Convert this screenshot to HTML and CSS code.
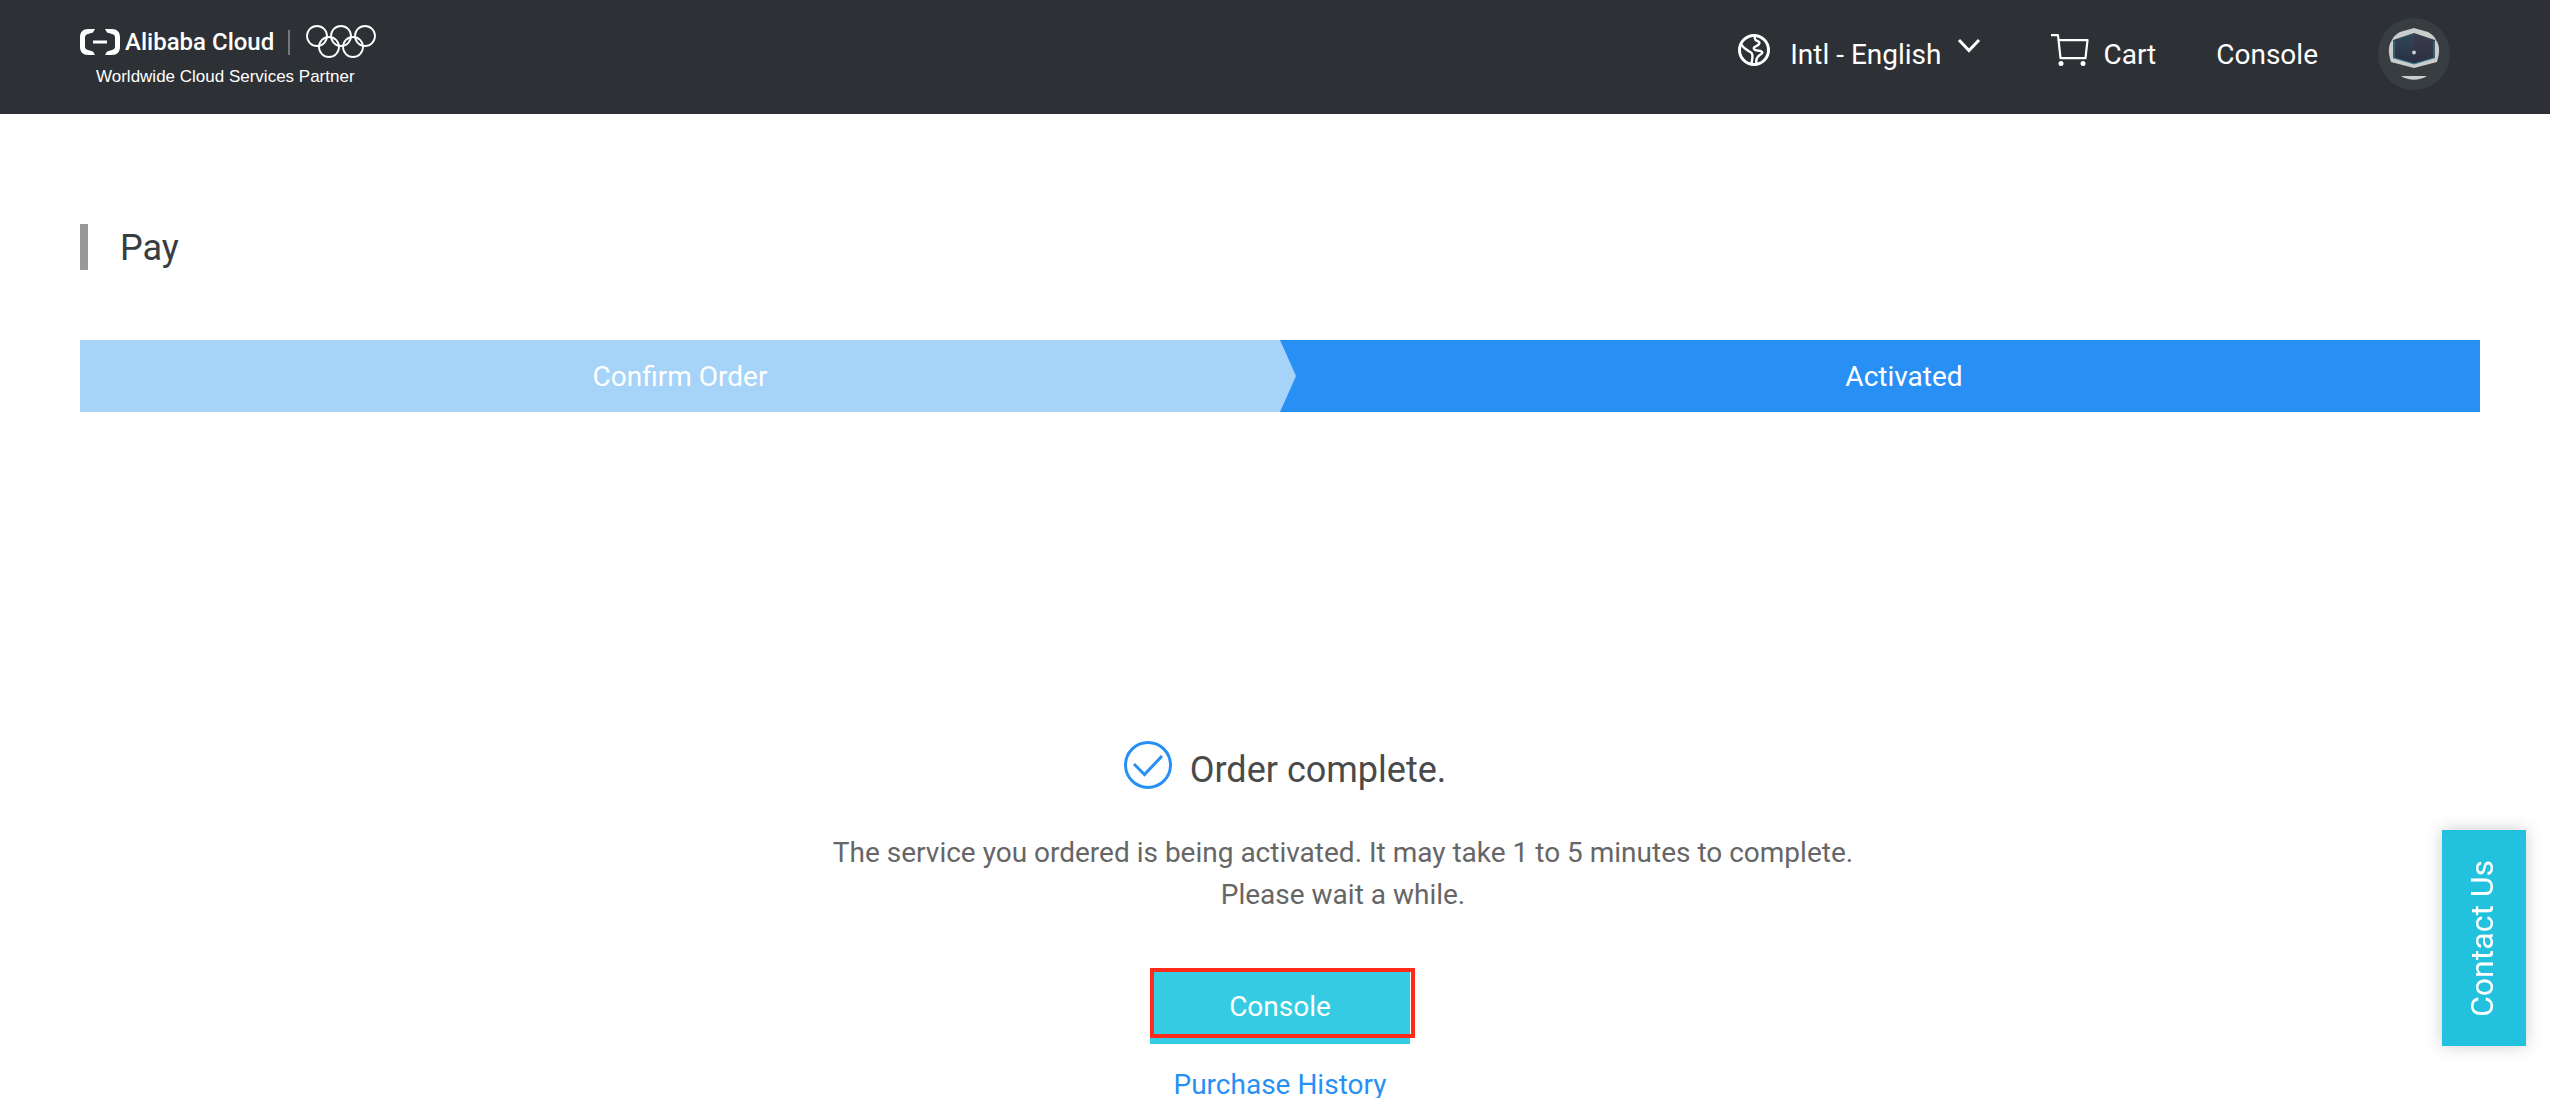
FILE: index.html
```html
<!DOCTYPE html>
<html lang="en">
<head>
<meta charset="utf-8">
<meta name="viewport" content="width=device-width, initial-scale=1">
<title>Pay - Alibaba Cloud</title>
<link rel="stylesheet" href="styles.css">
</head>
<body>
<header class="topbar">
  <a class="brand" href="#">
    <span class="brand-row">
      <svg class="brand-mark" viewBox="0 0 40 26" aria-hidden="true">
        <path fill="#fff" d="M15 0H8C3 0 0 3 0 8v10c0 5 3 8 8 8h7l-2-3.500-5-1.500c-2-.5-3-1.500-3-3.500v-9C5 6.500 6 5.500 8 5l5-1.500zM25 0h7c5 0 8 3 8 8v10c0 5-3 8-8 8h-7l2-3.500 5-1.500c2-.5 3-1.500 3-3.500v-9c0-2-1-3-3-3.500l-5-1.500zM13 11.500h14v3H13z"/>
      </svg>
      <span class="brand-name">Alibaba Cloud</span>
      <span class="brand-divider"></span>
      <svg class="rings" viewBox="0 0 70 34" fill="none" stroke="#fff" stroke-width="1.8" aria-hidden="true">
        <circle cx="11" cy="11" r="10"/><circle cx="35" cy="11" r="10"/><circle cx="59" cy="11" r="10"/>
        <circle cx="23" cy="22" r="10"/><circle cx="47" cy="22" r="10"/>
      </svg>
    </span>
    <span class="tagline">Worldwide Cloud Services Partner</span>
  </a>
  <nav class="nav">
    <button class="nav-item language" type="button">
      <svg class="globe" viewBox="0 0 32 32" fill="none" stroke="#fff" stroke-width="2.400" aria-hidden="true">
        <circle cx="16" cy="16" r="14.500" stroke-width="3"/>
        <path d="M3.500 10.500C5 14 9 16 13 18.500C16 20.500 14 25 13.500 30M17 2C16 6 18 6.500 20.500 7.500C23 9 20 11.500 17.500 12.500C14.500 14 16 16.500 19 16.500C24 16.500 26 18.500 22.500 20.500C19 22.500 17.500 25 18.500 30"/>
      </svg>
      <span>Intl - English</span>
      <svg class="chevron" viewBox="0 0 24 22" fill="none" stroke="#fff" stroke-width="3" aria-hidden="true"><path d="M2 6l10 10.500L22 6"/></svg>
    </button>
    <a class="nav-item cart" href="#">
      <svg class="cart-icon" viewBox="0 0 38 32" fill="none" stroke="#fff" stroke-width="2.200" aria-hidden="true">
        <path d="M0 1.200h7l2.500 23h25l2-18H7.500" stroke-linejoin="round"/>
        <circle cx="10" cy="29.500" r="2.500" fill="#fff" stroke="none"/><circle cx="32" cy="29.500" r="2.500" fill="#fff" stroke="none"/>
      </svg>
      <span>Cart</span>
    </a>
    <a class="nav-item" href="#">Console</a>
    <button class="avatar" type="button" aria-label="Account">
      <svg viewBox="0 0 72 72" aria-hidden="true">
        <defs>
          <linearGradient id="visor-left" x1="0" y1="0" x2="0" y2="1"><stop offset="0" stop-color="#30495a"/><stop offset="1" stop-color="#292f42"/></linearGradient>
          <linearGradient id="visor-right" x1="0" y1="0" x2="0" y2="1"><stop offset="0" stop-color="#3c3d4b"/><stop offset="1" stop-color="#292f42"/></linearGradient>
        </defs>
        <circle cx="36" cy="36" r="36" fill="#373d41"/>
        <path fill="#ccc" d="M36 10l14 4c4 2 7 5 8 8 4 6 4 12 1 22L36 50 13 44c-3-10-3-16 1-22 1-3 4-6 8-8z"/>
        <path fill="url(#visor-left)" d="M36 15L15 22v18l21 6z"/>
        <path fill="url(#visor-right)" d="M36 15l21 7v18l-21 6z"/>
        <path d="M16 23v17l20 6 20-6V23" fill="none" stroke="#3c8a9b"/>
        <circle cx="36" cy="34.500" r="2" fill="#ccc"/>
        <path fill="#ccc" d="M23 58h26c-8 5-18 5-26 0z"/>
      </svg>
    </button>
  </nav>
</header>
<main class="page">
  <h1 class="page-title">Pay</h1>
  <ol class="steps">
    <li class="step step-done">Confirm Order</li>
    <li class="step step-current" aria-current="step">Activated</li>
  </ol>
  <section class="result">
    <h2 class="result-title">
      <svg class="check" viewBox="0 0 48 48" fill="none" stroke="#2890f5" stroke-width="3" aria-hidden="true"><circle cx="24" cy="24" r="22.500"/><path d="M10 23l10.500 10.500L38 15"/></svg>
      <span>Order complete.</span>
    </h2>
    <p class="result-text">The service you ordered is being activated. It may take 1 to 5 minutes to complete.<br>Please wait a while.</p>
    <div class="action">
      <button class="console-button" type="button">Console</button>
      <span class="highlight"></span>
    </div>
    <a class="history" href="#">Purchase History</a>
  </section>
</main>
<button class="contact" type="button"><span>Contact Us</span></button>
</body>
</html>
```
FILE: styles.css
```css
* {
  box-sizing: border-box;
}

body {
  margin: 0;
  background: #fff;
  color: #373d41;
  font: 28px/40px Roboto, "Liberation Sans", sans-serif;
}

h1, h2, p, ol {
  margin: 0;
  padding: 0;
  font-weight: 400;
}

a {
  color: inherit;
  text-decoration: none;
}

button {
  padding: 0;
  border: 0;
  background: none;
  color: inherit;
  font: inherit;
  cursor: pointer;
}

svg {
  display: block;
  flex: none;
}

.topbar {
  display: flex;
  justify-content: space-between;
  align-items: flex-start;
  padding: 18px 100px 24px 80px;
  background: #2d3035;
  color: #fff;
}

.brand {
  display: flex;
  flex-direction: column;
}

.brand-row {
  display: flex;
  align-items: center;
  height: 48px;
}

.brand-mark {
  width: 40px;
  height: 26px;
}

.brand-name {
  margin-left: 5px;
  font-size: 24px;
  font-weight: 500;
  line-height: 32px;
}

.brand-divider {
  width: 2px;
  height: 25px;
  margin: 0 16px 0 14px;
  background: #777;
}

.rings {
  width: 70px;
  height: 34px;
}

.tagline {
  padding-left: 16px;
  font: 17px/22px "Liberation Sans", sans-serif;
}

.nav {
  display: flex;
  align-items: flex-start;
}

.nav-item {
  display: flex;
  align-items: flex-start;
  height: 42px;
  margin: 16px 60px 0 0;
  line-height: 42px;
}

.globe {
  width: 32px;
  height: 32px;
  margin-right: 20px;
}

.chevron {
  width: 24px;
  height: 22px;
  margin-left: 16px;
}

.language {
  margin-right: 70px;
}

.cart-icon {
  width: 38px;
  height: 32px;
  margin-right: 14px;
}

.avatar svg {
  width: 72px;
  height: 72px;
}

.page {
  padding: 110px 70px 0 80px;
}

.page-title {
  padding: 2px 0 0 32px;
  border-left: 8px solid #999;
  font-size: 36px;
  line-height: 44px;
}

.steps {
  display: flex;
  margin-top: 70px;
  list-style: none;
  color: #fff;
  line-height: 70px;
  text-align: center;
}

.step {
  position: relative;
  flex: 1 1 0;
  padding-top: 2px;
}

.step-done {
  z-index: 1;
  background: #a6d3f8;
}

.step-done::after {
  content: "";
  position: absolute;
  top: 0;
  left: 100%;
  width: 16px;
  height: 100%;
  background: #a6d3f8;
  clip-path: polygon(0 0, 100% 50%, 0 100%);
}

.step-current {
  background: linear-gradient(#2890f5, #2890f5);
}

.step-current::before {
  content: "";
  display: inline-block;
  width: 48px;
}

.result {
  display: flex;
  flex-direction: column;
  align-items: center;
  padding-top: 329px;
}

.result-title {
  display: flex;
  gap: 18px;
  padding-left: 10px;
  color: #4a4a4a;
  font-size: 36px;
  line-height: 58px;
}

.check {
  width: 48px;
  height: 48px;
}

.result-text {
  margin-top: 33px;
  padding-left: 126px;
  color: #666;
  line-height: 42px;
  text-align: center;
}

.action {
  position: relative;
  margin-top: 52px;
}

.console-button {
  display: block;
  width: 260px;
  height: 76px;
  padding-top: 2px;
  background: #35cbe3;
  color: #fff;
}

.highlight {
  position: absolute;
  top: 0;
  left: 0;
  width: 265px;
  height: 70px;
  border: 4px solid #ff2a1a;
  pointer-events: none;
}

.history {
  margin-top: 28px;
  color: #2890f5;
  line-height: 26px;
}

.contact {
  position: fixed;
  right: 24px;
  bottom: 52px;
  width: 84px;
  height: 216px;
  padding-left: 4px;
  background: #22c1de;
  box-shadow: 0 0 16px rgba(0, 0, 0, 0.2);
  color: #fff;
  font-size: 32px;
  line-height: 40px;
  writing-mode: vertical-rl;
  transform: rotate(180deg);
}
```
